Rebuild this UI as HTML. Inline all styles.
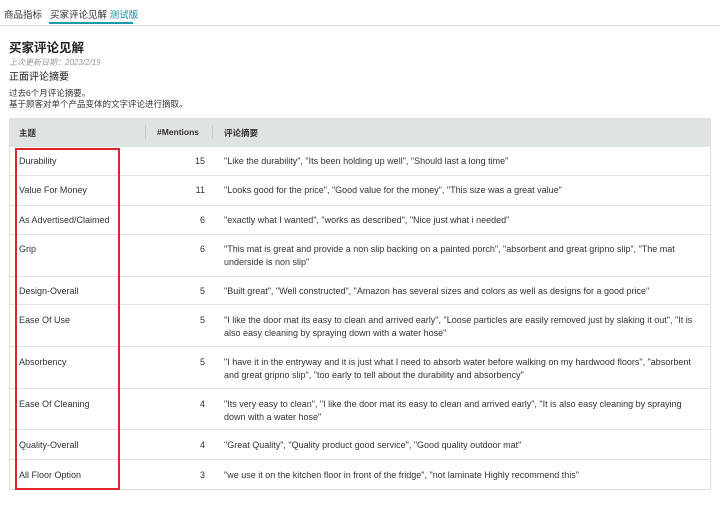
<!DOCTYPE html>
<html><head><meta charset="utf-8"><style>
*{margin:0;padding:0;box-sizing:border-box}
body{width:720px;height:506px;background:#fff;font-family:"Liberation Sans","Noto Sans CJK SC",sans-serif;color:#333;position:relative;overflow:hidden;font-size:9px}
.a{position:absolute;white-space:nowrap}
.row{position:absolute;left:9px;width:702px;border-bottom:1px solid #e3e3e3}
.row span{position:absolute;line-height:13px}
.c1{left:10px}.c2{right:506px;text-align:right}.c3{left:215px;width:480px;white-space:normal}
</style></head><body>
<div class="a" style="left:4px;top:7px;font-size:9.5px">商品指标</div>
<div class="a" style="left:50px;top:7px;font-size:9.5px">买家评论见解 <span style="color:#0f8a9c">测试版</span></div>
<div class="a" style="left:49px;top:22px;width:84px;height:2px;background:#1a9aa8"></div>
<div class="a" style="left:0;top:25px;width:720px;height:1px;background:#ddd"></div>
<div class="a" style="left:9px;top:37px;font-size:12.5px;font-weight:bold;color:#222">买家评论见解</div>
<div class="a" style="left:9px;top:57px;font-size:8px;color:#999;font-style:italic">上次更新日期：2023/2/19</div>
<div class="a" style="left:9px;top:68px;font-size:10px;color:#222">正面评论摘要</div>
<div class="a" style="left:9px;top:88px;font-size:8.5px;line-height:11px;color:#333">过去6个月评论摘要。<br>基于顾客对单个产品变体的文字评论进行摘取。</div>
<div class="a" style="left:9px;top:118px;width:702px;height:372px;border:1px solid #e0e0e0"></div>
<div class="a" style="left:9px;top:118px;width:702px;height:29px;background:#dfe3e4"></div>
<div class="a" style="left:19px;top:127px;font-weight:bold;font-size:8.5px">主题</div>
<div class="a" style="left:145px;top:125px;width:1px;height:14px;background:#c8cccd"></div>
<div class="a" style="left:157px;top:127px;font-weight:bold;font-size:8.5px">#Mentions</div>
<div class="a" style="left:212px;top:125px;width:1px;height:14px;background:#c8cccd"></div>
<div class="a" style="left:224px;top:127px;font-weight:bold;font-size:8.5px">评论摘要</div>

<div class="row" style="top:147px;height:29px"><span class="c1" style="top:8px">Durability</span><span class="c2" style="top:8px">15</span><span class="c3" style="top:8px">"Like the durability", "Its been holding up well", "Should last a long time"</span></div>
<div class="row" style="top:176px;height:30px"><span class="c1" style="top:8px">Value For Money</span><span class="c2" style="top:8px">11</span><span class="c3" style="top:8px">"Looks good for the price", "Good value for the money", "This size was a great value"</span></div>
<div class="row" style="top:206px;height:29px"><span class="c1" style="top:8px">As Advertised/Claimed</span><span class="c2" style="top:8px">6</span><span class="c3" style="top:8px">"exactly what I wanted", "works as described", "Nice just what i needed"</span></div>
<div class="row" style="top:235px;height:42px"><span class="c1" style="top:8px">Grip</span><span class="c2" style="top:8px">6</span><span class="c3" style="top:8px">"This mat is great and provide a non slip backing on a painted porch", "absorbent and great gripno slip", "The mat underside is non slip"</span></div>
<div class="row" style="top:277px;height:28px"><span class="c1" style="top:8px">Design-Overall</span><span class="c2" style="top:8px">5</span><span class="c3" style="top:8px">"Built great", "Well constructed", "Amazon has several sizes and colors as well as designs for a good price"</span></div>
<div class="row" style="top:305px;height:42px"><span class="c1" style="top:9px">Ease Of Use</span><span class="c2" style="top:9px">5</span><span class="c3" style="top:9px">"I like the door mat its easy to clean and arrived early", "Loose particles are easily removed just by slaking it out", "It is also easy cleaning by spraying down with a water hose"</span></div>
<div class="row" style="top:347px;height:42px"><span class="c1" style="top:9px">Absorbency</span><span class="c2" style="top:9px">5</span><span class="c3" style="top:9px">"I have it in the entryway and it is just what I need to absorb water before walking on my hardwood floors", "absorbent and great gripno slip", "too early to tell about the durability and absorbency"</span></div>
<div class="row" style="top:389px;height:41px"><span class="c1" style="top:9px">Ease Of Cleaning</span><span class="c2" style="top:9px">4</span><span class="c3" style="top:9px">"Its very easy to clean", "I like the door mat its easy to clean and arrived early", "It is also easy cleaning by spraying down with a water hose"</span></div>
<div class="row" style="top:430px;height:30px"><span class="c1" style="top:9px">Quality-Overall</span><span class="c2" style="top:9px">4</span><span class="c3" style="top:9px">"Great Quality", "Quality product good service", "Good quality outdoor mat"</span></div>
<div class="row" style="top:460px;height:29px;border-bottom:none"><span class="c1" style="top:9px">All Floor Option</span><span class="c2" style="top:9px">3</span><span class="c3" style="top:9px">"we use it on the kitchen floor in front of the fridge", "not laminate Highly recommend this"</span></div>

<div class="a" style="left:15px;top:148px;width:105px;height:342px;border:2px solid #e0252a"></div>
</body></html>
